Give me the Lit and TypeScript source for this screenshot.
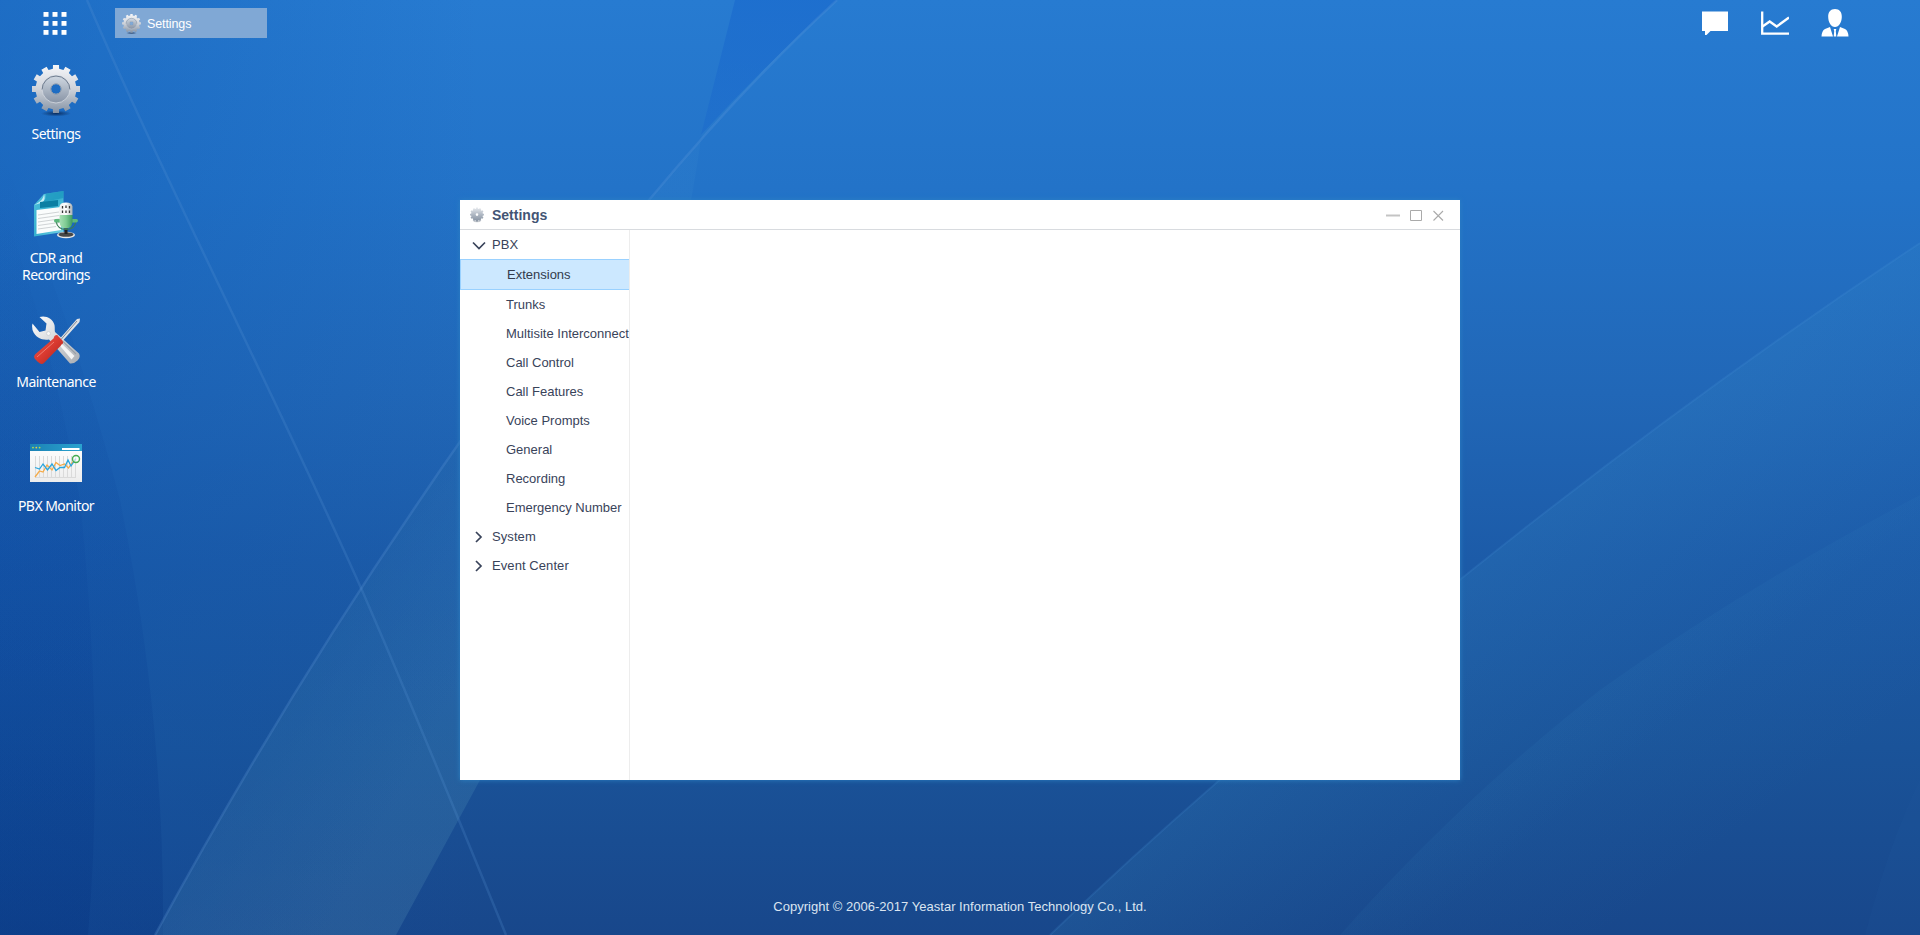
import { LitElement, html, svg, css } from "lit";
import { customElement, property, state } from "lit/decorators.js";
import { classMap } from "lit/directives/class-map.js";

function gearPath(c: number, outer: number, inner: number, hole: number, teeth = 12): string {
  const pts: string[] = [];
  const step = (Math.PI * 2) / teeth;
  const at = (r: number, a: number) => `${(c + r * Math.sin(a)).toFixed(2)} ${(c - r * Math.cos(a)).toFixed(2)}`;
  for (let i = 0; i < teeth; i++) {
    const a = i * step;
    pts.push(at(inner, a - step * 0.29), at(outer, a - step * 0.24), at(outer, a + step * 0.24), at(inner, a + step * 0.29));
  }
  return `M${pts.join("L")}Z M${c - hole} ${c}a${hole} ${hole} 0 1 0 ${hole * 2} 0a${hole} ${hole} 0 1 0 ${-hole * 2} 0Z`;
}

const gear = svg`
  <defs>
    <linearGradient id="gearBody" x1="0" y1="0" x2="0" y2="1">
      <stop offset="0" stop-color="#f6f7f9"/><stop offset=".5" stop-color="#cfd3da"/><stop offset="1" stop-color="#8492a4"/>
    </linearGradient>
    <linearGradient id="gearDisc" x1="0" y1="0" x2="0" y2="1">
      <stop offset="0" stop-color="#d3dbe4"/><stop offset="1" stop-color="#8793a5"/>
    </linearGradient>
    <radialGradient id="gearShade"><stop offset="0" stop-color="#06204a" stop-opacity=".8"/><stop offset="1" stop-color="#06204a" stop-opacity="0"/></radialGradient>
  </defs>
  <ellipse cx="24" cy="48.500" rx="15" ry="3" fill="url(#gearShade)"/>
  <path d=${gearPath(24, 24.2, 20.5, 5)} fill="url(#gearBody)" fill-rule="evenodd"/>
  <path d="M10 24a14 14 0 1 0 28 0a14 14 0 1 0 -28 0Z M19 24a5 5 0 1 0 10 0a5 5 0 1 0 -10 0Z" fill="url(#gearDisc)" fill-rule="evenodd"/>
  <path d="M10 25a14 14 0 0 1 28 0" fill="none" stroke="#707d8f" stroke-width="1"/>
  <path d="M10 24a14 14 0 0 0 28 0" fill="none" stroke="#d6dbe2" stroke-width=".8"/>
  <circle cx="24" cy="24" r="5.200" fill="none" stroke="#8090a5" stroke-width=".8"/>`;

const smallGear = svg`
  <defs>
    <linearGradient id="smallGear" x1="0" y1="0" x2="0" y2="1">
      <stop offset="0" stop-color="#e6e9ed"/><stop offset=".5" stop-color="#abb4c0"/><stop offset="1" stop-color="#7d8a9b"/>
    </linearGradient>
  </defs>
  <ellipse cx="24" cy="47" rx="12" ry="3" fill="#5b6776" opacity=".35"/>
  <path d=${gearPath(24, 24, 20.5, 4.5)} fill="url(#smallGear)" fill-rule="evenodd" opacity=".95"/>`;

const recordings = svg`
  <defs>
    <linearGradient id="docFill" x1="0" y1="0" x2="1" y2="1"><stop offset="0" stop-color="#4fc0dc"/><stop offset=".5" stop-color="#36b0cf"/><stop offset="1" stop-color="#7bd6e6"/></linearGradient>
    <linearGradient id="micBody" x1="0" y1="0" x2="1" y2="0"><stop offset="0" stop-color="#a7dfb4"/><stop offset=".5" stop-color="#7fcb93"/><stop offset="1" stop-color="#3c9a60"/></linearGradient>
    <linearGradient id="micHead" x1="0" y1="0" x2="1" y2="0"><stop offset="0" stop-color="#eee"/><stop offset=".5" stop-color="#fff"/><stop offset="1" stop-color="#a9b0b2"/></linearGradient>
  </defs>
  <g transform="translate(-2 0)">
  <path d="M12 3L31.500 0V41L2 45.500V14Z" fill="url(#docFill)"/>
  <path d="M12 3C11.500 7 9 11 2 14L11 11.500C13 9 13 6 12 3Z" fill="#c2edf6"/>
  <path d="M14 2.700Q15 8 10 11.300L31.500 7V0Z" fill="#1794bb" opacity=".65"/>
  <path d="M8 11L26 9V15L8 17Z" fill="#0b7fa3"/>
  <path d="M4.500 19L29 16V39L4.500 43Z" fill="#fafcfc"/>
  <path d="M6 24L27 21M6 27.500L27 24.500M6 31L27 28M6 34.500L27 31.500M6 38L24 35.500" stroke="#c9ced0" stroke-width=".9"/>
  <ellipse cx="34" cy="44" rx="9" ry="3.300" fill="#e8e8e8"/>
  <ellipse cx="34" cy="43.500" rx="7.500" ry="2.300" fill="#474747"/>
  <path d="M32.500 36h3v7h-3z" fill="#222"/>
  <path d="M24 30C25 36 29 38.500 34 38.500S43 36 44 30" fill="none" stroke="#3c7d55" stroke-width="1.200"/>
  <path d="M22 29.500q0-1.500 1.500-1.500H44.500q1.500 0 1.500 1.500t-1.500 2H23.500q-1.500 0-1.500-2Z" fill="#5cb87c"/>
  <path d="M27.500 24H40.500V31Q40 37.500 34 37.500T27.500 31Z" fill="url(#micBody)"/>
  <path d="M27.500 24V15.500Q28 11.500 34 11.500T40.500 15.500V24Z" fill="url(#micHead)"/>
  <path d="M30.500 15v2.500M34 14.500V17M37.500 15v2.500M30.500 19.500v2.500M34 19.500V22M37.500 19.500v2.500" stroke="#333" stroke-width="1.300"/>
  </g>`;

const maintenance = svg`
  <defs>
    <linearGradient id="steel" x1="0" y1="0" x2="1" y2="1"><stop offset="0" stop-color="#fff"/><stop offset=".5" stop-color="#d4d6d9"/><stop offset="1" stop-color="#a9adb3"/></linearGradient>
    <linearGradient id="grip" x1="0" y1="0" x2="1" y2="1"><stop offset="0" stop-color="#f0584a"/><stop offset=".5" stop-color="#d93a30"/><stop offset="1" stop-color="#a9201b"/></linearGradient>
  </defs>
  <path d="M7.500 1C13-1 21 2 22.500 9C23 12 22.500 14 23 16L47 37.500Q49 41 45.500 44.500T38 47.500L17 23.500C11 24.500 3.500 22.500 .5 14Q-.5 10 .5 7.500L7.500 16L13.500 14.500L14.500 7.500Z" fill="url(#steel)"/>
  <path d="M27 27L41 41.500M31 25.500L44 38" stroke="#9a9fa6" stroke-width="1.100"/>
  <path d="M28 26L42.500 40L39.500 43.500L26.500 28Z" fill="#f4f4f4"/>
  <circle cx="16.500" cy="17.500" r="2" fill="#f7f7f7" stroke="#c9ccd0" stroke-width=".7"/>
  <path d="M45 3L48 2.500L47.500 6L30.500 25L28 22.500Z" fill="#dfe2e6"/>
  <path d="M45 5L29 23.500" stroke="#858b94" stroke-width="1"/>
  <path d="M22.500 20Q25 18 26.500 20.500L30.500 24.500Q32 27.500 29.500 28.500L28.500 30L12 47Q9.500 49.500 6 46L3 43Q1 40.500 3.500 38L21.500 22.500Z" fill="url(#grip)"/>
  <path d="M5 41L22 26" stroke="#f58a7e" stroke-width=".8"/>`;

const monitor = svg`
  <defs>
    <linearGradient id="bar" x1="0" y1="0" x2="1" y2="0"><stop offset="0" stop-color="#1b82b5"/><stop offset="1" stop-color="#2ba3cf"/></linearGradient>
    <linearGradient id="sheet" x1="0" y1="0" x2="0" y2="1"><stop offset="0" stop-color="#fff"/><stop offset="1" stop-color="#ededed"/></linearGradient>
  </defs>
  <path d="M0 0H52V38H0Z" fill="url(#sheet)"/>
  <path d="M0 0H52V7H0Z" fill="url(#bar)"/>
  <path d="M32 4h17.500v2H32z" fill="#fff"/>
  <circle cx="3" cy="3.600" r=".9" fill="#b5dd4a"/><circle cx="6.300" cy="3.600" r=".9" fill="#f2c744"/><circle cx="9.600" cy="3.600" r=".9" fill="#b5dd4a"/>
  <path d="M5.500 12V33M9.500 12V33M13.500 12V33M17.500 12V33M21.500 12V33M25.500 12V33M29.500 12V33M33.500 12V33M37.500 12V33M41.500 12V33M45.500 12V33M5 33.500H46" stroke="#dadada" stroke-width="1"/>
  <path d="M5 33L9.500 27L13 28L17 21L22 26L26 18.500L30 21.500L34.500 20L38.500 24L42 19L46 15" fill="none" stroke="#f5ab49" stroke-width="1.300"/>
  <path d="M5 23.500L9.500 25L13 20L17.500 26L22 20L26 26.500L30 23.500H34.500L38 16L41 22L46 14.500" fill="none" stroke="#2aa6de" stroke-width="1.300"/>
  <circle cx="46" cy="15" r="3.500" fill="#fff" fill-opacity=".6" stroke="#45ad50" stroke-width="1.400"/>`;

interface Shortcut { label: string; icon: unknown; box: string; }
const shortcuts: Shortcut[] = [
  { label: "Settings", icon: gear, box: "0 -1 48 52" },
  { label: "CDR and Recordings", icon: recordings, box: "0 -3 44 52" },
  { label: "Maintenance", icon: maintenance, box: "0 -4 48 52" },
  { label: "PBX Monitor", icon: monitor, box: "0 -8 52 52" },
];

interface Branch { label: string; open: boolean; items: string[]; }

@customElement("desk-wallpaper")
class DeskWallpaper extends LitElement {
  static styles = css`
    :host { display: block; width: 100%; height: 100%; }
    svg { display: block; width: 100%; height: 100%; }
  `;
  render() {
    return html`<svg viewBox="0 0 1920 935" preserveAspectRatio="none">
      <defs>
        <linearGradient id="sky" x1="0" y1="0" x2="0" y2="1">
          <stop offset="0" stop-color="#277bd1"/><stop offset=".2" stop-color="#2373c8"/>
          <stop offset=".42" stop-color="#2167b7"/><stop offset=".6" stop-color="#1c5ba8"/>
          <stop offset=".8" stop-color="#1a5399"/><stop offset="1" stop-color="#18478b"/>
        </linearGradient>
        <linearGradient id="left" x1="0" y1="0" x2="1" y2="0">
          <stop offset="0" stop-color="#0b52ac" stop-opacity=".33"/><stop offset="1" stop-color="#0b52ac" stop-opacity="0"/>
        </linearGradient>
        <linearGradient id="band" gradientUnits="userSpaceOnUse" x1="0" y1="0" x2="0" y2="935">
          <stop offset="0" stop-color="#4a9ad8" stop-opacity=".05"/><stop offset=".5" stop-color="#4695cc" stop-opacity=".18"/><stop offset=".8" stop-color="#4a90b8" stop-opacity=".24"/><stop offset="1" stop-color="#4f88b0" stop-opacity=".28"/>
        </linearGradient>
        <linearGradient id="fade" gradientUnits="userSpaceOnUse" x1="250" y1="720" x2="400" y2="800">
          <stop offset="0" stop-color="#124b95" stop-opacity=".28"/><stop offset="1" stop-color="#124b95" stop-opacity="0"/>
        </linearGradient>
        <linearGradient id="beam" gradientUnits="userSpaceOnUse" x1="1500" y1="500" x2="1680" y2="720">
          <stop offset="0" stop-color="#3c92c8" stop-opacity=".19"/><stop offset="1" stop-color="#3c92c8" stop-opacity="0"/>
        </linearGradient>
        <linearGradient id="beamLow" gradientUnits="userSpaceOnUse" x1="1600" y1="690" x2="1720" y2="850">
          <stop offset="0" stop-color="#3c92c8" stop-opacity=".08"/><stop offset="1" stop-color="#3c92c8" stop-opacity="0"/>
        </linearGradient>
        <linearGradient id="edge" x1="0" y1="0" x2="0" y2="1">
          <stop offset="0" stop-color="#063a8c" stop-opacity="0"/><stop offset=".5" stop-color="#073e98" stop-opacity=".13"/><stop offset="1" stop-color="#04307c" stop-opacity=".26"/>
        </linearGradient>
        <linearGradient id="wedge" x1="0" y1="0" x2="0" y2="1">
          <stop offset="0" stop-color="#1b6cce" stop-opacity=".8"/><stop offset="1" stop-color="#1b6acb" stop-opacity=".6"/>
        </linearGradient>
      </defs>
      <path d="M0 0H1920V935H0Z" fill="url(#sky)"/>
      <path d="M0 0H480V935H0Z" fill="url(#left)"/>
      <path d="M0 150Q70 310 120 500Q165 720 163 935H0Z" fill="url(#edge)"/>
      <path d="M0 200Q50 330 80 500Q105 740 88 935H0Z" fill="url(#edge)"/>
      <path d="M837 0Q745 85 649 200Q520 350 420 500Q280 705 155 935H396L480 780Q660 440 702 132Q720 60 735 0Z" fill="url(#band)"/>
      <path d="M649 200Q520 350 420 500Q280 705 155 935H396L480 780Z" fill="url(#fade)"/>
      <path d="M735 0H837Q765 65 701 135Z" fill="url(#wedge)"/>
      <path d="M837 0Q745 85 649 200Q520 350 420 500Q280 705 155 935" fill="none" stroke="#6b9fdd" stroke-opacity=".22" stroke-width="2.500"/>
      <path d="M87 0C155 160 270 385 361 588Q415 712 506 935" fill="none" stroke="#5c98d8" stroke-opacity=".22" stroke-width="2.500"/>
      <path d="M1920 243Q1690 395 1462 578Q1320 690 1215 784Q1130 858 1050 935H1920Z" fill="url(#beam)"/>
      <path d="M1920 243Q1690 395 1462 578Q1320 690 1215 784Q1130 858 1050 935" fill="none" stroke="#4f9add" stroke-opacity=".16" stroke-width="2"/>
      <path d="M1920 495Q1740 590 1600 690Q1460 800 1340 935H1920Z" fill="url(#beamLow)"/>
      <path d="M1920 780Q1890 840 1865 935H1920Z" fill="#2a62a8" fill-opacity=".1"/>
    </svg>`;
  }
}

@customElement("desk-shortcut")
class DeskShortcut extends LitElement {
  @property({ attribute: false }) item!: Shortcut;
  static styles = css`
    :host { display: flex; flex-direction: column; align-items: center; height: 124px; width: 112px; gap: 9px; }
    svg { display: block; height: 52px; flex: none; overflow: visible; }
    .label { width: 90px; text-align: center; color: #fff; font: 14px/17px "Noto Sans", sans-serif; letter-spacing: -.55px; }
  `;
  render() {
    const w = this.item.box.split(" ")[2];
    return html`<svg viewBox=${this.item.box} width=${w}>${this.item.icon}</svg><span class="label">${this.item.label}</span>`;
  }
}

@customElement("settings-window")
class SettingsWindow extends LitElement {
  @state() private selected = "Extensions";
  @state() private tree: Branch[] = [
    { label: "PBX", open: true, items: ["Extensions", "Trunks", "Multisite Interconnect", "Call Control", "Call Features", "Voice Prompts", "General", "Recording", "Emergency Number"] },
    { label: "System", open: false, items: [] },
    { label: "Event Center", open: false, items: [] },
  ];
  static styles = css`
    :host { display: flex; flex-direction: column; background: #fff; box-shadow: 0 0 5px #2c82c4; color: #39435a; font: 13px/29px "Liberation Sans", Arial, sans-serif; }
    .title { display: flex; align-items: center; height: 29px; flex: none; border-bottom: 1px solid #d8dbdf; padding: 0 15px 0 10px; }
    .gear { width: 14px; height: 16px; margin-right: 8px; }
    .name { flex: 1; font-weight: bold; font-size: 14px; color: #435474; padding-top: 1px; }
    .controls { width: 60px; height: 14px; }
    .body { flex: 1; display: flex; min-height: 0; }
    .tree { width: 169px; flex: none; border-right: 1px solid #ededed; overflow: hidden; white-space: nowrap; }
    .branch { display: flex; align-items: center; height: 29px; padding-left: 12px; gap: 6px; letter-spacing: .08px; }
    .branch svg { width: 14px; height: 14px; }
    .leaf { height: 29px; padding-left: 46px; cursor: default; }
    .leaf.on { background: #cce8ff; border: 1px solid #99d1ff; border-right: 0; color: #333b4c; }
  `;
  private toggle(b: Branch) {
    b.open = !b.open;
    this.tree = [...this.tree];
  }
  render() {
    return html`
      <div class="title">
        <svg class="gear" viewBox="0 0 48 51">${smallGear}</svg>
        <span class="name">Settings</span>
        <svg class="controls" viewBox="0 0 60 14" fill="none">
          <path d="M1 7.500H15" stroke="#c4c4c4" stroke-width="2"/>
          <path d="M25.500 2.500H36.500V12.500H25.500Z" stroke="#aaa"/>
          <path d="M48.500 3L58 12.500M58 3L48.500 12.500" stroke="#aaa" stroke-width="1.100"/>
        </svg>
      </div>
      <div class="body">
        <div class="tree">
          ${this.tree.map((b) => html`
            <div class="branch" @click=${() => this.toggle(b)}>
              <svg viewBox="0 0 14 14" fill="none" stroke="#39435a" stroke-width="1.700"><path d=${b.open ? "M1 4.500L7 10.500L13 4.500" : "M4 2L9 7L4 12"}/></svg>
              <span>${b.label}</span>
            </div>
            ${b.open ? b.items.map((i) => html`<div class=${classMap({ leaf: true, on: i === this.selected })} @click=${() => (this.selected = i)}>${i}</div>`) : ""}
          `)}
        </div>
      </div>`;
  }
}

@customElement("app-root")
class AppRoot extends LitElement {
  static styles = css`
    :host { display: flex; flex-direction: column; position: relative; width: 100%; height: 100vh; overflow: hidden; background: #1f69ba; font-family: "Liberation Sans", Arial, sans-serif; }
    .wallpaper { position: absolute; inset: 0; z-index: 0; }
    .taskbar { position: relative; display: flex; align-items: center; height: 46px; flex: none; padding: 0 71px 0 43px; }
    .apps { width: 24px; height: 24px; margin-right: 48px; }
    .task { display: flex; align-items: center; gap: 6px; width: 152px; height: 30px; box-sizing: border-box; padding: 1px 0 0 7px; background: #80a8d5; color: #fff; font-size: 12.500px; letter-spacing: -0.1px; }
    .task svg { width: 19px; height: 20px; }
    .tray { display: flex; gap: 32px; margin-left: auto; }
    .tray svg { width: 28px; height: 30px; }
    .desktop { position: relative; flex: 1; display: flex; flex-direction: column; padding-top: 18px; }
    .footer { position: relative; text-align: center; color: #dbe5f1; font-size: 13px; line-height: 18px; padding-bottom: 19px; letter-spacing: .02px; }
    .window { position: absolute; left: 460px; top: 200px; width: 1000px; height: 580px; }
  `;
  render() {
    return html`
      <desk-wallpaper class="wallpaper"></desk-wallpaper>
      <div class="taskbar">
        <svg class="apps" viewBox="0 0 24 24" fill="#fff">
          ${[1, 10, 19].map((y) => [0.5, 9.5, 18.5].map((x) => svg`<rect x=${x} y=${y} width="5" height="4.800"/>`))}
        </svg>
        <div class="task"><svg viewBox="0 0 48 51">${gear}</svg><span>Settings</span></div>
        <div class="tray">
          <svg viewBox="0 0 28 30" fill="#fff"><path d="M1 3.500H27V23H9.500L5.500 27H4V23H1Z"/></svg>
          <svg viewBox="0 0 28 30" fill="none" stroke="#fff" stroke-width="2.300"><path d="M1.200 3.500V25.700H28"/><path d="M1.500 18.500L8.700 13.500L15.700 18.500L28 9.500"/></svg>
          <svg viewBox="0 0 28 30" fill="#fff">
            <path d="M14 1C18.500 1 21 4 20.800 9C20.600 14.500 18 19 14 19S7.400 14.500 7.200 9C7 4 9.500 1 14 1Z"/>
            <path d="M9 19L12 28.500H.5Q.8 22.500 4 21Z M19 19L16 28.500H27.500Q27.200 22.500 24 21Z M12.700 21H15.300L14.800 23L15.300 28.500H12.700L13.200 23Z"/>
          </svg>
        </div>
      </div>
      <div class="desktop">${shortcuts.map((s) => html`<desk-shortcut .item=${s}></desk-shortcut>`)}</div>
      <div class="footer">Copyright © 2006-2017 Yeastar Information Technology Co., Ltd.</div>
      <settings-window class="window"></settings-window>`;
  }
}
